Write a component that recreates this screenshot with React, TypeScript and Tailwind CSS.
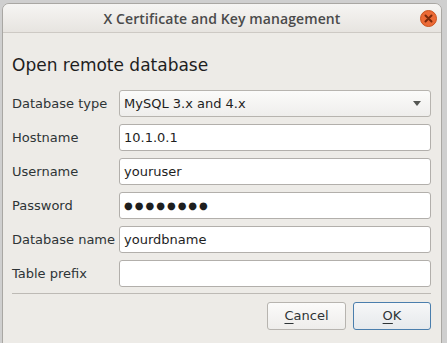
const rows = [
  { label: "Hostname", value: "10.1.0.1" },
  { label: "Username", value: "youruser" },
  { label: "Password", value: "●●●●●●●●", secret: true },
  { label: "Database name", value: "yourdbname" },
  { label: "Table prefix", value: "" },
];

const App = () => {
  return (
    <div className="w-[447px] h-[343px] overflow-hidden bg-[#cfcfcf] pt-[3px] pl-[2px] font-['DejaVu_Sans',sans-serif] text-[13px] text-[#2e3436]">
      <div className="w-[440px] h-[341px] flex flex-col bg-[#edebe7] border border-[#a9a7a3] rounded-t-[7px] overflow-hidden">
        {/* title bar */}
        <div className="h-[29px] shrink-0 flex items-center justify-center relative bg-gradient-to-b from-[#f6f5f3] to-[#e7e4e0] border-b border-[#cdc9c4]">
          <span className="font-['Open_Sans',sans-serif] font-semibold text-[14px] text-[#4a4a4a] tracking-[0.1px]">
            X Certificate and Key management
          </span>
          <div className="absolute right-[4px] top-[6px] w-[17px] h-[17px] rounded-full bg-[#ec6a36] border border-[#c9531f] flex items-center justify-center">
            <svg width="9" height="9" viewBox="0 0 9 9">
              <path d="M1.5 1.5 L7.5 7.5 M7.5 1.5 L1.5 7.5" stroke="#7a2a0c" strokeWidth="2" strokeLinecap="round" />
            </svg>
          </div>
        </div>

        <div className="flex flex-col pl-[9px] pr-[10px] pt-[21px]">
          <h1 className="text-[17px] leading-[22px] text-[#1e1e1e]">Open remote database</h1>

          <div className="flex flex-col gap-[7px] mt-[14px]">
            <div className="flex items-center h-[27px]">
              <span className="w-[107px] shrink-0">Database type</span>
              <div className="flex-1 h-full flex items-center justify-between pl-[4px] pr-[9px] rounded-[3px] border border-[#b7b4af] bg-gradient-to-b from-[#fbfbfa] to-[#efeeec]">
                <span className="text-[#1e1e1e]">MySQL 3.x and 4.x</span>
                <svg width="8" height="5" viewBox="0 0 8 5">
                  <path d="M0 0 H8 L4 5 Z" fill="#555753" />
                </svg>
              </div>
            </div>
            {rows.map((row, i) => (
              <div key={i} className="flex items-center h-[27px]">
                <span className="w-[107px] shrink-0">{row.label}</span>
                <div className="flex-1 h-full flex items-center pl-[4px] rounded-[3px] border border-[#b2afab] bg-white">
                  <span className={row.secret ? "text-[#1e1e1e] text-[10px] tracking-[2px]" : "text-[#1e1e1e]"}>
                    {row.value}
                  </span>
                </div>
              </div>
            ))}
          </div>

          <div className="mt-[6px] h-px bg-[#bdbab5]" />

          <div className="flex justify-end gap-[7px] mt-[8px]">
            <button className="w-[79px] h-[28px] rounded-[3px] border border-[#b7b4af] bg-gradient-to-b from-[#fbfbfa] to-[#eeedeb] text-[#2e3436]">
              <span className="underline underline-offset-[3px]">C</span>ancel
            </button>
            <button className="w-[78px] h-[28px] rounded-[3px] border border-[#4a7ead] bg-gradient-to-b from-[#f6f7f8] to-[#e6e9ec] text-[#2e3436]">
              <span className="underline underline-offset-[3px]">O</span>K
            </button>
          </div>
        </div>
      </div>
    </div>
  );
};

export default App;
